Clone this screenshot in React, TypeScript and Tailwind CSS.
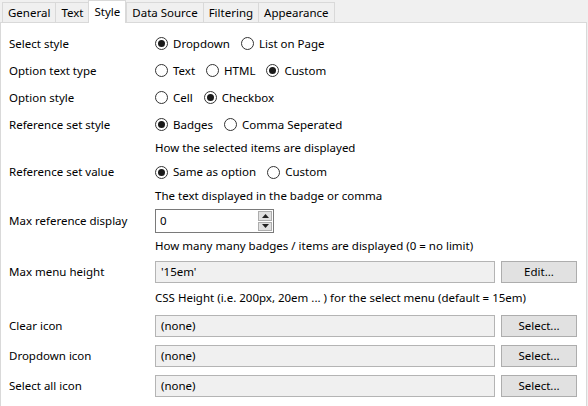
import React from 'react';

const tabs = ['General', 'Text', 'Style', 'Data Source', 'Filtering', 'Appearance'];

const Radio: React.FC<{ label: string; checked?: boolean }> = ({ label, checked }) => (
  <div className="flex items-center gap-[5px]">
    <span className="w-[13px] h-[13px] rounded-full border border-[#333] bg-white flex items-center justify-center">
      {checked && <span className="w-[7px] h-[7px] rounded-full bg-[#1a1a1a]" />}
    </span>
    <span>{label}</span>
  </div>
);

const Row: React.FC<{ label?: string; h: string; children?: React.ReactNode }> = ({ label, h, children }) => (
  <div className={`flex items-center ${h}`}>
    <div className="w-[146px] shrink-0">{label}</div>
    <div className="flex-1 flex items-center">{children}</div>
  </div>
);

const PickRow: React.FC<{ value: string; button: string }> = ({ value, button }) => (
  <div className="flex items-center gap-[6px] w-full">
    <div className="flex-1 h-[22px] bg-[#f0f0f0] border border-[#b4b4b4] flex items-center px-[5px]">{value}</div>
    <button className="w-[76px] h-[22px] bg-[#e1e1e1] border border-[#adadad] flex items-center justify-center">{button}</button>
  </div>
);

export default function App() {
  return (
    <div
      className="w-[588px] h-[406px] bg-[#f0f0f0] overflow-hidden text-[11.5px] text-black"
      style={{ fontFamily: '"Segoe UI", "Noto Sans", sans-serif' }}
    >
      <div className="flex items-end h-[22px] pl-[2px]">
        {tabs.map((t) =>
          t === 'Style' ? (
            <div key={t} className="h-[23px] -mb-[1px] px-[5px] bg-white border border-b-0 border-[#d9d9d9] flex items-center relative z-10">
              {t}
            </div>
          ) : (
            <div key={t} className="h-[20px] px-[5px] border border-b-0 border-r-0 last:border-r border-[#d9d9d9] flex items-center">
              {t}
            </div>
          )
        )}
      </div>
      <div className="w-[587px] h-[400px] bg-white border border-[#d9d9d9] pt-[7px] pl-[8px] pr-[9px]">
        <Row label="Select style" h="h-[27px]">
          <div className="flex gap-[11px]">
            <Radio label="Dropdown" checked />
            <Radio label="List on Page" />
          </div>
        </Row>
        <Row label="Option text type" h="h-[27px]">
          <div className="flex gap-[11px]">
            <Radio label="Text" />
            <Radio label="HTML" />
            <Radio label="Custom" checked />
          </div>
        </Row>
        <Row label="Option style" h="h-[27px]">
          <div className="flex gap-[11px]">
            <Radio label="Cell" />
            <Radio label="Checkbox" checked />
          </div>
        </Row>
        <Row label="Reference set style" h="h-[27px]">
          <div className="flex gap-[11px]">
            <Radio label="Badges" checked />
            <Radio label="Comma Seperated" />
          </div>
        </Row>
        <Row h="h-[19px]">How the selected items are displayed</Row>
        <Row label="Reference set value" h="h-[30px]">
          <div className="flex gap-[11px]">
            <Radio label="Same as option" checked />
            <Radio label="Custom" />
          </div>
        </Row>
        <Row h="h-[18px]">The text displayed in the badge or comma</Row>
        <Row label="Max reference display" h="h-[32px]">
          <div className="w-[119px] h-[24px] border border-[#7a7a7a] bg-white flex">
            <div className="flex-1 flex items-center pl-[4px]">0</div>
            <div className="w-[16px] flex flex-col gap-[1px] p-[1px]">
              <div className="flex-1 bg-[#e1e1e1] border border-[#adadad] flex items-center justify-center">
                <svg width="7" height="4" viewBox="0 0 7 4"><path d="M0 4 L3.5 0 L7 4 Z" fill="#222" /></svg>
              </div>
              <div className="flex-1 bg-[#e1e1e1] border border-[#adadad] flex items-center justify-center">
                <svg width="7" height="4" viewBox="0 0 7 4"><path d="M0 0 L3.5 4 L7 0 Z" fill="#222" /></svg>
              </div>
            </div>
          </div>
        </Row>
        <Row h="h-[18px]">How many many badges / items are displayed (0 = no limit)</Row>
        <Row label="Max menu height" h="h-[34px]">
          <PickRow value="'15em'" button="Edit..." />
        </Row>
        <Row h="h-[18px]">CSS Height (i.e. 200px, 20em ... ) for the select menu (default = 15em)</Row>
        <Row label="Clear icon" h="h-[38px]">
          <PickRow value="(none)" button="Select..." />
        </Row>
        <Row label="Dropdown icon" h="h-[22px]">
          <PickRow value="(none)" button="Select..." />
        </Row>
        <Row label="Select all icon" h="h-[38px]">
          <PickRow value="(none)" button="Select..." />
        </Row>
      </div>
    </div>
  );
}
